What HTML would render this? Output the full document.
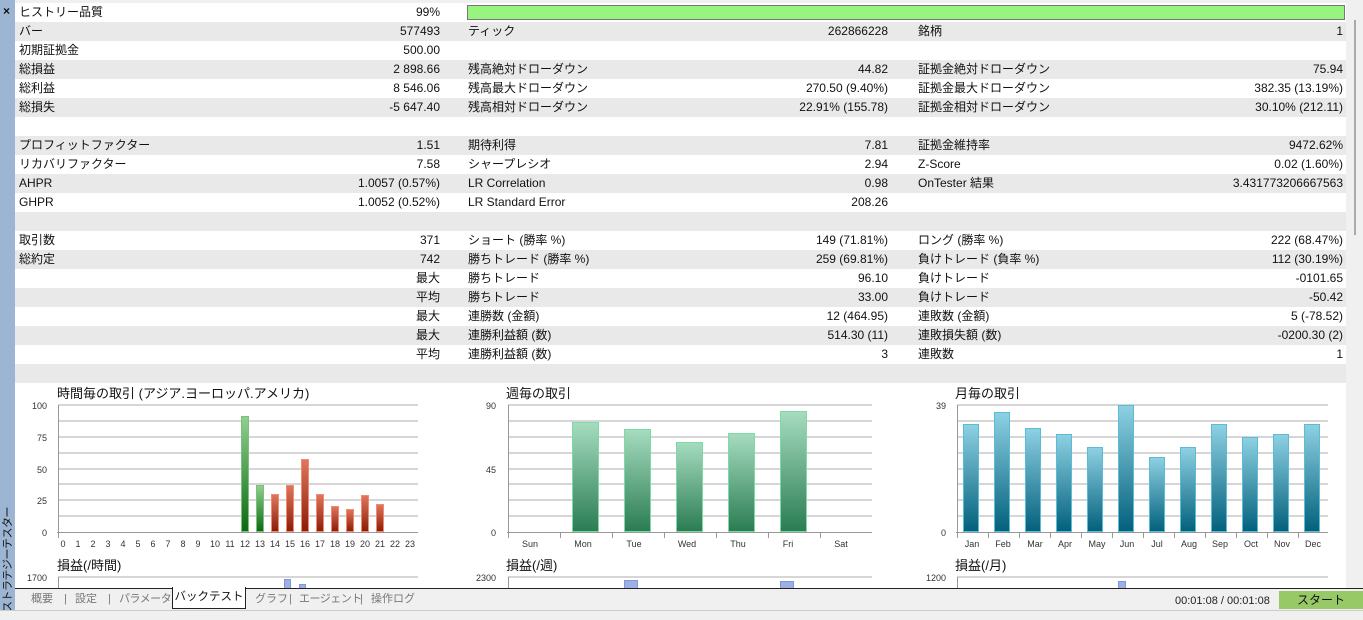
<!DOCTYPE html>
<html><head><meta charset="utf-8"><style>
*{margin:0;padding:0;box-sizing:border-box}
body{width:1363px;height:620px;overflow:hidden;background:#f0f0f0;font-family:"Liberation Sans","Noto Sans CJK JP",sans-serif;font-size:12px;color:#111;position:relative}
#side{position:absolute;left:0;top:0;width:15px;height:612px;background:#9cb5d3;overflow:hidden}
#x{position:absolute;left:3px;top:5px;font-size:12px;font-weight:bold;line-height:12px}
#vt{position:absolute;left:-44px;top:553px;width:104px;height:14px;line-height:14px;transform:rotate(-90deg);font-size:11px;white-space:nowrap;text-align:center;letter-spacing:-0.5px}
#main{position:absolute;left:15px;top:3px;width:1331px;height:585px;background:#fff;overflow:hidden}
.r{position:absolute;left:0;width:1331px;height:19px;line-height:19px}
.g{background:#e9e9e9}
.t,.v{position:absolute;top:0;height:19px;line-height:19px;white-space:nowrap}
.v{text-align:right}
#sb{position:absolute;left:1346px;top:0;width:17px;height:588px;background:#f0f0f0}
#thumb{position:absolute;left:1354px;top:20px;width:2px;height:215px;background:#aaa}
#tabs{position:absolute;left:15px;top:588px;width:1348px;height:22px;border-top:1px solid #222;background:#f0f0f0}
.tab{position:absolute;top:591px;height:16px;line-height:16px;color:#777;font-size:11px;white-space:nowrap}
#act{position:absolute;left:172px;top:587px;width:74px;height:22px;background:#fff;border:1px solid #222;border-top:none;text-align:center;line-height:20px;color:#111;white-space:nowrap;font-size:11.5px}
#stat{position:absolute;left:0;top:610px;width:1363px;height:10px;border-top:1px solid #ccc;background:#f0f0f0}
</style></head><body>
<div id="main">
<div class="r" style="top:0"><span class="t" style="left:4px">ヒストリー品質</span><span class="v" style="right:906px">99%</span>
<div style="position:absolute;left:452px;top:2px;width:878px;height:15px;background:#97f47e;border:1px solid #777"></div></div>
<div class="r g" style="top:19px"><span class="t" style="left:4px">バー</span><span class="v" style="right:906px">577493</span><span class="t" style="left:453px">ティック</span><span class="v" style="right:458px">262866228</span><span class="t" style="left:903px">銘柄</span><span class="v" style="right:3px">1</span></div>
<div class="r" style="top:38px"><span class="t" style="left:4px">初期証拠金</span><span class="v" style="right:906px">500.00</span></div>
<div class="r g" style="top:57px"><span class="t" style="left:4px">総損益</span><span class="v" style="right:906px">2 898.66</span><span class="t" style="left:453px">残高絶対ドローダウン</span><span class="v" style="right:458px">44.82</span><span class="t" style="left:903px">証拠金絶対ドローダウン</span><span class="v" style="right:3px">75.94</span></div>
<div class="r" style="top:76px"><span class="t" style="left:4px">総利益</span><span class="v" style="right:906px">8 546.06</span><span class="t" style="left:453px">残高最大ドローダウン</span><span class="v" style="right:458px">270.50 (9.40%)</span><span class="t" style="left:903px">証拠金最大ドローダウン</span><span class="v" style="right:3px">382.35 (13.19%)</span></div>
<div class="r g" style="top:95px"><span class="t" style="left:4px">総損失</span><span class="v" style="right:906px">-5 647.40</span><span class="t" style="left:453px">残高相対ドローダウン</span><span class="v" style="right:458px">22.91% (155.78)</span><span class="t" style="left:903px">証拠金相対ドローダウン</span><span class="v" style="right:3px">30.10% (212.11)</span></div>
<div class="r" style="top:114px"></div>
<div class="r g" style="top:133px"><span class="t" style="left:4px">プロフィットファクター</span><span class="v" style="right:906px">1.51</span><span class="t" style="left:453px">期待利得</span><span class="v" style="right:458px">7.81</span><span class="t" style="left:903px">証拠金維持率</span><span class="v" style="right:3px">9472.62%</span></div>
<div class="r" style="top:152px"><span class="t" style="left:4px">リカバリファクター</span><span class="v" style="right:906px">7.58</span><span class="t" style="left:453px">シャープレシオ</span><span class="v" style="right:458px">2.94</span><span class="t" style="left:903px">Z-Score</span><span class="v" style="right:3px">0.02 (1.60%)</span></div>
<div class="r g" style="top:171px"><span class="t" style="left:4px">AHPR</span><span class="v" style="right:906px">1.0057 (0.57%)</span><span class="t" style="left:453px">LR Correlation</span><span class="v" style="right:458px">0.98</span><span class="t" style="left:903px">OnTester 結果</span><span class="v" style="right:3px">3.431773206667563</span></div>
<div class="r" style="top:190px"><span class="t" style="left:4px">GHPR</span><span class="v" style="right:906px">1.0052 (0.52%)</span><span class="t" style="left:453px">LR Standard Error</span><span class="v" style="right:458px">208.26</span></div>
<div class="r g" style="top:209px"></div>
<div class="r" style="top:228px"><span class="t" style="left:4px">取引数</span><span class="v" style="right:906px">371</span><span class="t" style="left:453px">ショート (勝率 %)</span><span class="v" style="right:458px">149 (71.81%)</span><span class="t" style="left:903px">ロング (勝率 %)</span><span class="v" style="right:3px">222 (68.47%)</span></div>
<div class="r g" style="top:247px"><span class="t" style="left:4px">総約定</span><span class="v" style="right:906px">742</span><span class="t" style="left:453px">勝ちトレード (勝率 %)</span><span class="v" style="right:458px">259 (69.81%)</span><span class="t" style="left:903px">負けトレード (負率 %)</span><span class="v" style="right:3px">112 (30.19%)</span></div>
<div class="r" style="top:266px"><span class="v" style="right:906px">最大</span><span class="t" style="left:453px">勝ちトレード</span><span class="v" style="right:458px">96.10</span><span class="t" style="left:903px">負けトレード</span><span class="v" style="right:3px">-0101.65</span></div>
<div class="r g" style="top:285px"><span class="v" style="right:906px">平均</span><span class="t" style="left:453px">勝ちトレード</span><span class="v" style="right:458px">33.00</span><span class="t" style="left:903px">負けトレード</span><span class="v" style="right:3px">-50.42</span></div>
<div class="r" style="top:304px"><span class="v" style="right:906px">最大</span><span class="t" style="left:453px">連勝数 (金額)</span><span class="v" style="right:458px">12 (464.95)</span><span class="t" style="left:903px">連敗数 (金額)</span><span class="v" style="right:3px">5 (-78.52)</span></div>
<div class="r g" style="top:323px"><span class="v" style="right:906px">最大</span><span class="t" style="left:453px">連勝利益額 (数)</span><span class="v" style="right:458px">514.30 (11)</span><span class="t" style="left:903px">連敗損失額 (数)</span><span class="v" style="right:3px">-0200.30 (2)</span></div>
<div class="r" style="top:342px"><span class="v" style="right:906px">平均</span><span class="t" style="left:453px">連勝利益額 (数)</span><span class="v" style="right:458px">3</span><span class="t" style="left:903px">連敗数</span><span class="v" style="right:3px">1</span></div>
<div class="r g" style="top:361px;height:19px"></div>
</div>

<svg style="position:absolute;left:0;top:0" width="1346" height="588" font-family="Liberation Sans, Noto Sans CJK JP, sans-serif">
<defs>
<linearGradient id="gg" x1="0" y1="0" x2="0" y2="1"><stop offset="0" stop-color="#8fd08f"/><stop offset="1" stop-color="#0b6a12"/></linearGradient>
<linearGradient id="rg" x1="0" y1="0" x2="0" y2="1"><stop offset="0" stop-color="#e2765c"/><stop offset="1" stop-color="#8a1c08"/></linearGradient>
<linearGradient id="wg" x1="0" y1="0" x2="0" y2="1"><stop offset="0" stop-color="#a6dcc0"/><stop offset="1" stop-color="#2a7c53"/></linearGradient>
<linearGradient id="mg" x1="0" y1="0" x2="0" y2="1"><stop offset="0" stop-color="#8ed1e3"/><stop offset="1" stop-color="#02607c"/></linearGradient>
</defs>
<g stroke="#c8c8c8" stroke-width="1.5">
<path d="M58 405H418M58 421H418M58 437H418M58 453H418M58 469H418M58 484H418M58 500H418M58 516H418"/>
<path d="M508 405H872M508 421H872M508 437H872M508 453H872M508 469H872M508 484H872M508 500H872M508 516H872"/>
<path d="M957 405H1328M957 421H1328M957 437H1328M957 453H1328M957 469H1328M957 484H1328M957 500H1328M957 516H1328"/>
<path d="M58 577H418M508 577H872M957 577H1328"/>
</g>
<g stroke="#999" stroke-width="1">
<path d="M58.5 405V538M57 532.5H418"/>
<path d="M508.5 405V538M507 532.5H872M560.5 532V538M612.5 532V538M664.5 532V538M716.5 532V538M768.5 532V538M820.5 532V538"/>
<path d="M957.5 405V538M956 532.5H1328M988.5 532V538M1019.5 532V538M1050.5 532V538M1081.5 532V538M1112.5 532V538M1143.5 532V538M1174.5 532V538M1205.5 532V538M1236.5 532V538M1267.5 532V538M1298.5 532V538"/>
<path d="M58.5 577V588M508.5 577V588M957.5 577V588"/>
</g>
<g font-size="13" fill="#111">
<text x="57" y="398">時間毎の取引 (アジア.ヨーロッパ.アメリカ)</text>
<text x="506" y="398">週毎の取引</text>
<text x="955" y="398">月毎の取引</text>
<text x="57" y="570">損益(/時間)</text>
<text x="506" y="570">損益(/週)</text>
<text x="955" y="570">損益(/月)</text>
</g>
<g font-size="9" fill="#333" text-anchor="end">
<text x="47" y="409">100</text><text x="47" y="441">75</text><text x="47" y="473">50</text><text x="47" y="504">25</text><text x="47" y="536">0</text><text x="47" y="581">1700</text>
<text x="496" y="409">90</text><text x="496" y="473">45</text><text x="496" y="536">0</text><text x="496" y="581">2300</text>
<text x="946" y="409">39</text><text x="946" y="536">0</text><text x="946" y="581">1200</text>
</g>
<g font-size="9" fill="#333" text-anchor="middle">
<text x="63" y="547">0</text><text x="78" y="547">1</text><text x="93" y="547">2</text><text x="108" y="547">3</text><text x="123" y="547">4</text><text x="138" y="547">5</text><text x="153" y="547">6</text><text x="168" y="547">7</text><text x="183" y="547">8</text><text x="198" y="547">9</text><text x="215" y="547">10</text><text x="230" y="547">11</text><text x="245" y="547">12</text><text x="260" y="547">13</text><text x="275" y="547">14</text><text x="290" y="547">15</text><text x="305" y="547">16</text><text x="320" y="547">17</text><text x="335" y="547">18</text><text x="350" y="547">19</text><text x="365" y="547">20</text><text x="380" y="547">21</text><text x="395" y="547">22</text><text x="410" y="547">23</text>
<text x="530" y="547">Sun</text><text x="583" y="547">Mon</text><text x="634" y="547">Tue</text><text x="687" y="547">Wed</text><text x="738" y="547">Thu</text><text x="788" y="547">Fri</text><text x="841" y="547">Sat</text>
<text x="972" y="547">Jan</text><text x="1003" y="547">Feb</text><text x="1035" y="547">Mar</text><text x="1065" y="547">Apr</text><text x="1097" y="547">May</text><text x="1127" y="547">Jun</text><text x="1157" y="547">Jul</text><text x="1189" y="547">Aug</text><text x="1220" y="547">Sep</text><text x="1251" y="547">Oct</text><text x="1282" y="547">Nov</text><text x="1313" y="547">Dec</text>
</g>
<g stroke="#7dc07d" stroke-width="1" fill="url(#gg)">
<rect x="241.5" y="416.5" width="7" height="115"/><rect x="256.5" y="485.5" width="7" height="46"/>
</g>
<g stroke="#f08a72" stroke-width="1" fill="url(#rg)">
<rect x="271.5" y="494.5" width="7" height="37"/><rect x="286.5" y="485.5" width="7" height="46"/><rect x="301.5" y="459.5" width="7" height="72"/><rect x="316.5" y="494.5" width="7" height="37"/><rect x="331.5" y="506.5" width="7" height="25"/><rect x="346.5" y="509.5" width="7" height="22"/><rect x="361.5" y="495.5" width="7" height="36"/><rect x="376.5" y="504.5" width="7" height="27"/>
</g>
<g stroke="#7fd9a3" stroke-width="1" fill="url(#wg)">
<rect x="572.5" y="422.5" width="26" height="109"/><rect x="624.5" y="429.5" width="26" height="102"/><rect x="676.5" y="442.5" width="26" height="89"/><rect x="728.5" y="433.5" width="26" height="98"/><rect x="780.5" y="411.5" width="26" height="120"/>
</g>
<g stroke="#5bbcd8" stroke-width="1" fill="url(#mg)">
<rect x="963.5" y="424.5" width="15" height="107"/><rect x="994.5" y="412.5" width="15" height="119"/><rect x="1025.5" y="428.5" width="15" height="103"/><rect x="1056.5" y="434.5" width="15" height="97"/><rect x="1087.5" y="447.5" width="15" height="84"/><rect x="1118.5" y="405.5" width="15" height="126"/><rect x="1149.5" y="457.5" width="15" height="74"/><rect x="1180.5" y="447.5" width="15" height="84"/><rect x="1211.5" y="424.5" width="15" height="107"/><rect x="1242.5" y="437.5" width="15" height="94"/><rect x="1273.5" y="434.5" width="15" height="97"/><rect x="1304.5" y="424.5" width="15" height="107"/>
</g>
<g fill="#9db0e3" stroke="#7f97d9">
<rect x="284.5" y="579.5" width="6" height="9"/><rect x="299.5" y="584.5" width="6" height="4"/>
<rect x="624.5" y="580.5" width="13" height="8"/><rect x="780.5" y="581.5" width="13" height="7"/>
<rect x="1118.5" y="581.5" width="7" height="7"/>
</g>
</svg>

<div id="sb"></div><div id="thumb"></div>
<div id="side"><div id="x">×</div><div id="vt">ストラテジーテスター</div></div>
<div id="tabs"></div>
<span class="tab" style="left:31px">概要</span><span class="tab" style="left:64px">|</span>
<span class="tab" style="left:75px">設定</span><span class="tab" style="left:108px">|</span>
<span class="tab" style="left:119px;letter-spacing:-0.5px">パラメータ</span>
<div id="act">バックテスト</div>
<span class="tab" style="left:255px">グラフ</span><span class="tab" style="left:289px">|</span>
<span class="tab" style="left:299px;letter-spacing:-0.5px">エージェント</span><span class="tab" style="left:360px">|</span>
<span class="tab" style="left:371px">操作ログ</span>
<span style="position:absolute;left:1175px;top:594px;font-size:11px;line-height:14px;color:#222">00:01:08 / 00:01:08</span>
<div style="position:absolute;left:1279px;top:591px;width:84px;height:18px;background:#97c966;text-align:center;line-height:18px;color:#111">スタート</div>
<div id="stat"></div>
</body></html>
